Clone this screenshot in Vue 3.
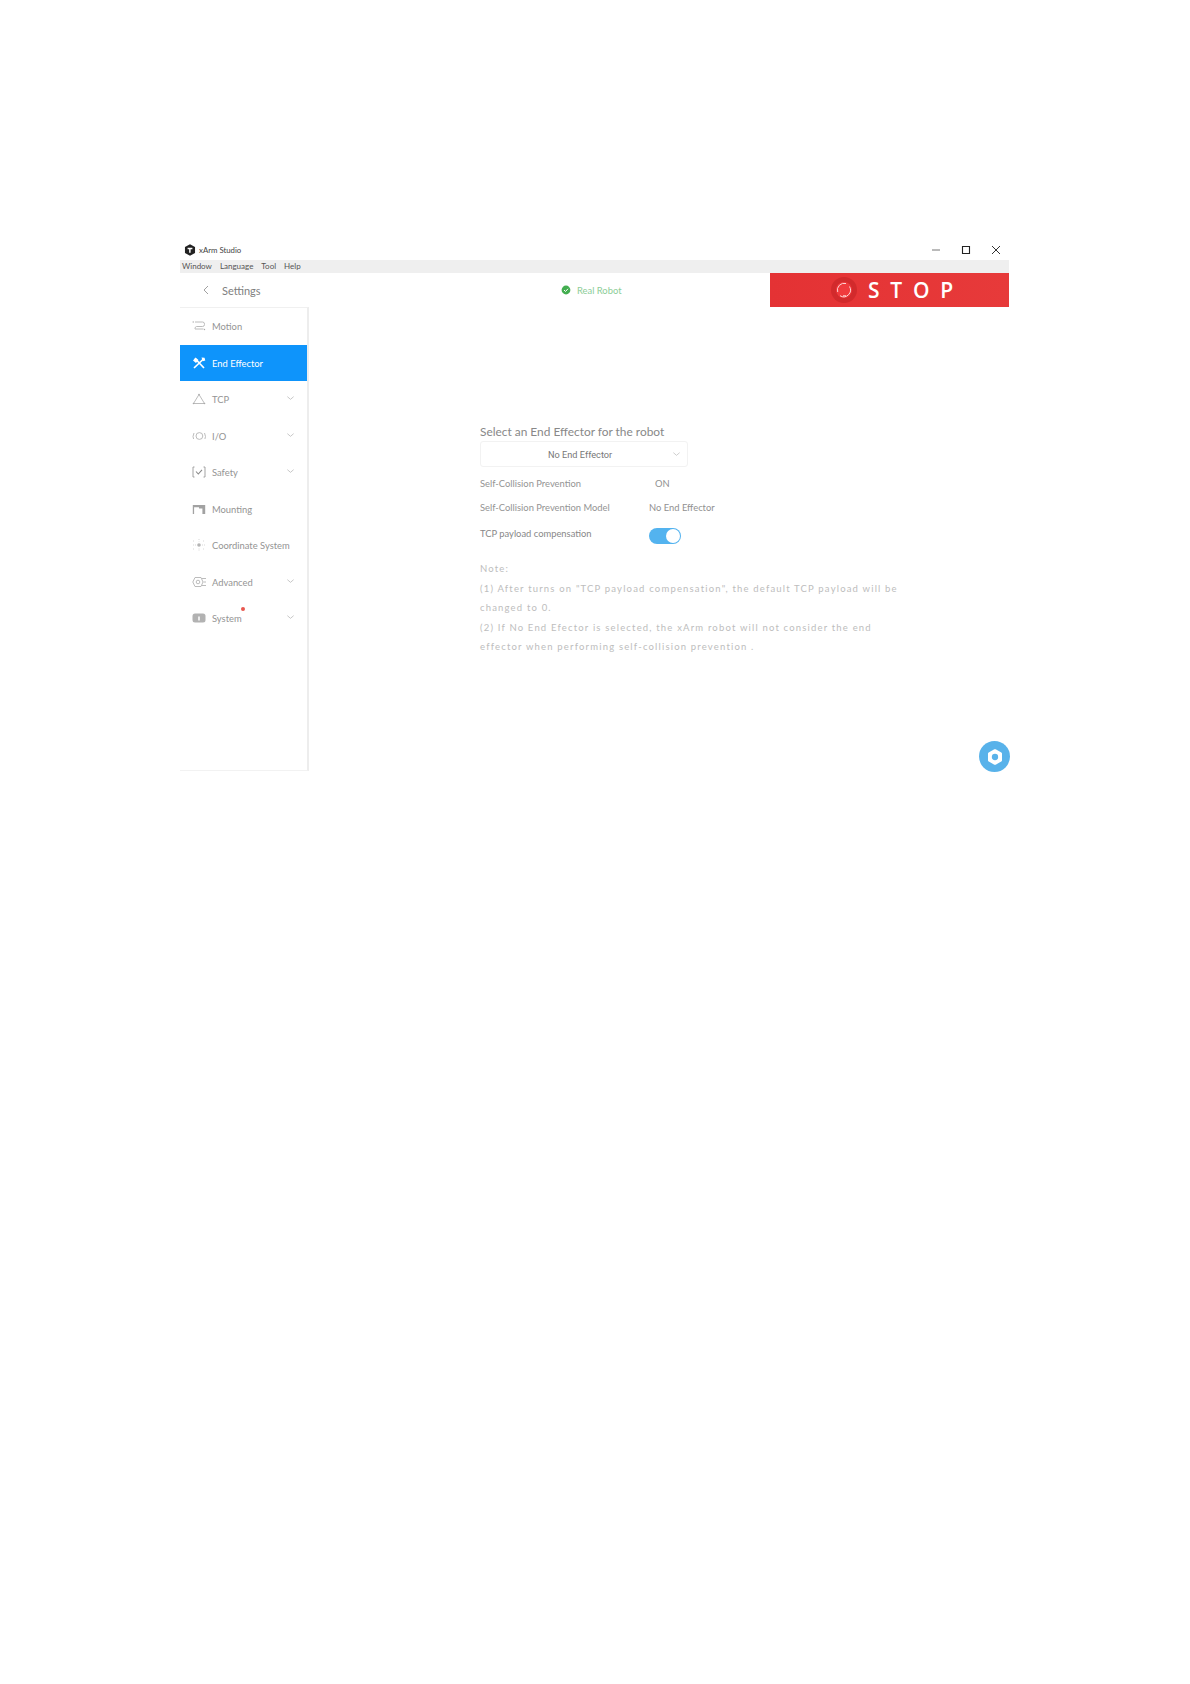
<template>
  <div class="page">
    <div class="window">
      <div class="titlebar">
        <svg class="logo" viewBox="0 0 10 10"><path d="M5 .3 9.200 2.600v4.800L5 9.700.8 7.400V2.600z" fill="#222"/><path d="M3 3.200h4v1.200H5.500V7.300H4.300V4.400H3z" fill="#fff"/></svg>
        <span class="app-name">xArm Studio</span>
        <div class="win-controls">
          <svg viewBox="0 0 12 12"><path d="M2 6h8" stroke="#777" fill="none"/></svg>
          <svg viewBox="0 0 12 12"><path d="M2.500 2.500h7v7h-7z" stroke="#222" stroke-width="1.100" fill="none"/></svg>
          <svg viewBox="0 0 12 12"><path d="M2 2l8 8M10 2l-8 8" stroke="#333" fill="none"/></svg>
        </div>
      </div>
      <div class="menubar">
        <span v-for="m in menus" :key="m">{{ m }}</span>
      </div>
      <div class="header">
        <div class="header-left">
          <svg class="back" viewBox="0 0 10 14"><path d="M7.500 2 2.500 7l5 5" stroke="#888" fill="none"/></svg>
          <span class="settings">Settings</span>
        </div>
        <div class="status">
          <svg viewBox="0 0 10 10"><circle cx="5" cy="5" r="4.400" fill="#43ae50"/><path d="M3 5l1.500 1.500L7 3.800" stroke="#fff" fill="none"/></svg>
          <span>Real Robot</span>
        </div>
        <div class="stop">
          <span class="stop-btn">
            <svg viewBox="0 0 20 20"><circle cx="10" cy="10" r="8" fill="#f03a3d"/><path d="M3.700 12A6.800 6.800 0 0 1 12 3.500M15.500 6.500A6.800 6.800 0 0 1 6 15.700" stroke="#fcd6d6" stroke-width="1" fill="none"/><path d="M9 15.800 12 15.800" stroke="#fcd6d6" stroke-width="1"/></svg>
          </span>
          <span class="stop-text">STOP</span>
        </div>
      </div>
      <div class="body">
        <aside class="sidebar">
          <div v-for="item in items" :key="item.label" class="item" :class="{ active: item.active }">
            <svg class="icon" viewBox="0 0 14 14" v-html="item.icon"></svg>
            <span class="label">{{ item.label }}<i v-if="item.dot" class="dot"></i></span>
            <svg v-if="item.arrow" class="chev" viewBox="0 0 10 6"><path d="M1.500 1.500 5 4.500l3.500-3" stroke="#bbb" fill="none" stroke-width=".9"/></svg>
          </div>
        </aside>
        <main class="content">
          <h2>Select an End Effector for the robot</h2>
          <div class="select">
            <span>No End Effector</span>
            <svg viewBox="0 0 10 6"><path d="M1.500 1.500 5 4.500l3.500-3" stroke="#c4c4c4" fill="none" stroke-width=".9"/></svg>
          </div>
          <div class="row r1"><span class="k">Self-Collision Prevention</span><span class="v on">ON</span></div>
          <div class="row r2"><span class="k">Self-Collision Prevention Model</span><span class="v">No End Effector</span></div>
          <div class="row r3"><span class="k">TCP payload compensation</span><span class="toggle"><i></i></span></div>
          <div class="note">
            <p>Note:</p>
            <p>(1) After turns on "TCP payload compensation", the default TCP payload will be changed to 0.</p>
            <p>(2) If No End Efector is selected, the xArm robot will not consider the end effector when performing self-collision prevention .</p>
          </div>
        </main>
        <div class="fab">
          <svg viewBox="0 0 16 16"><path d="M8 3.300 12.100 5.650v4.700L8 12.700 3.900 10.350v-4.700z" fill="#fff" stroke="#fff" stroke-width="2" stroke-linejoin="round"/><circle cx="8" cy="8" r="2.300" fill="#58b2ea"/></svg>
        </div>
      </div>
    </div>
  </div>
</template>

<script setup>
const menus = ['Window', 'Language', 'Tool', 'Help']
const g = 'stroke="#b4b4b4" fill="none" stroke-width=".9"'
const items = [
  { label: 'Motion', icon: `<path d="M3 3h7.500a2 2 0 0 1 2 2v.5a2 2 0 0 1-2 2H4.500a2 2 0 0 0-1.500 2v.5h8.500" ${g}/><circle cx="1.200" cy="3" r=".7" fill="#aaa"/><circle cx="12.500" cy="10.500" r=".7" fill="#aaa"/>` },
  { label: 'End Effector', active: true, icon: `<path d="M2 12 12 2.500M3 2.500l9 9.500" stroke="#fff" stroke-width="1.700" fill="none"/><path d="M1 4.500 3.500 1.500 6.500 4 4 7zM9.500 1.500l3 .2.800 2.800-2.500.8z" fill="#fff"/>` },
  { label: 'TCP', arrow: true, icon: `<path d="M7 2.500 1.500 11.500h11z" ${g}/><circle cx="7" cy="2.500" r=".8" fill="#aaa"/><circle cx="1.500" cy="11.500" r=".8" fill="#aaa"/><circle cx="12.500" cy="11.500" r=".8" fill="#aaa"/>` },
  { label: 'I/O', arrow: true, icon: `<circle cx="7.400" cy="7" r="3.400" ${g}/><path d="M2 4 1 7.500 1.600 10M12.500 4l1 3.500-.6 2.500" ${g}/>` },
  { label: 'Safety', arrow: true, icon: `<path d="M2.500 2H1v10h1.500M11.500 2H13v10h-1.500" stroke="#999" fill="none" stroke-width=".9"/><path d="M4 6.500 6.300 9 10 4.800" stroke="#888" stroke-width="1.100" fill="none"/>` },
  { label: 'Mounting', icon: `<path d="M.8 3h12.400v9h-2.800V6.500H7V5.200H2.100V12H.8z" fill="#a2a2a2"/>` },
  { label: 'Coordinate System', icon: `<circle cx="7" cy="7" r="1.800" fill="#b4b4b4"/><path d="M7 1v2.500M7 10.500V13M1 7h3M10 7h3M1 3h2M11 3h2M1 11h2M11 11h2" stroke="#d2d2d2" stroke-width=".9" stroke-dasharray="1 1" fill="none"/>` },
  { label: 'Advanced', arrow: true, icon: `<circle cx="6" cy="7" r="1.800" ${g}/><path d="M3 2.500h6l2 4.500-2 4.500H3L.8 7z" ${g}/><path d="M10 3.500h4M11.500 7H14M10 10.500h4" ${g}/>` },
  { label: 'System', arrow: true, dot: true, icon: `<rect x=".5" y="2.500" width="13" height="9" rx="2.500" fill="#b2b2b2"/><path d="M7 5.500v4" stroke="#fff" stroke-width="1.500"/>` },
]
</script>

<style>
body { background: #fff; }
</style>

<style scoped>
.page { padding: 240px 181px 0 180px; height: 1444px; background: #fff; font-family: Lato, "Liberation Sans", sans-serif; }
.window { width: 829px; }
.titlebar { height: 20px; display: flex; align-items: center; padding-left: 4px; }
.logo { width: 12px; height: 12px; }
.app-name { font-size: 7.800px; margin-left: 3px; color: #444; }
.win-controls { margin-left: auto; display: flex; gap: 18px; padding-right: 7px; }
.win-controls svg { width: 12px; height: 12px; }
.menubar { height: 13px; line-height: 13px; background: #efefef; display: flex; align-items: flex-start; gap: 8px; padding-left: 2px; font-size: 8px; color: #555; }
.header { height: 34px; display: flex; align-items: center; position: relative; }
.header-left { display: flex; align-items: center; width: 353px; padding-left: 22px; box-sizing: border-box; }
.back { width: 8px; height: 12px; }
.settings { margin-left: 12px; font-size: 11px; color: #808080; }
.status { display: flex; align-items: center; gap: 6px; width: 208px; margin-left: 28px; font-size: 9.400px; color: #8ccd97; }
.status svg { width: 10px; height: 10px; }
.stop { margin-left: auto; width: 239px; height: 34px; background: linear-gradient(90deg, #e43234, #e73a3a); display: flex; align-items: center; color: #fff; padding-left: 61px; box-sizing: border-box; }
.stop-btn { width: 26px; height: 26px; border-radius: 50%; background: #d22a2c; display: flex; align-items: center; justify-content: center; }
.stop-btn svg { width: 20px; height: 20px; }
.stop-text { font-family: "Open Sans", sans-serif; font-size: 21px; font-weight: 600; letter-spacing: 10.800px; margin-left: 11px; }
.body { display: flex; position: relative; height: 464px; }
.sidebar { width: 129px; height: 464px; box-sizing: border-box; border-right: 2px solid #ededed; border-bottom: 1px solid #f2f2f2; border-top: 1px solid #f0f0f0; }
.item { height: 36.500px; display: flex; align-items: center; padding-left: 12px; color: #949494; font-size: 9.400px; position: relative; }
.item.active { background: #0e94fb; color: #fff; }
.icon { width: 14px; height: 14px; flex: none; }
.label { margin-left: 6px; padding-top: 1px; position: relative; white-space: nowrap; }
.dot { position: absolute; right: -3px; top: -5px; width: 4px; height: 4px; border-radius: 50%; background: #e8574f; }
.chev { width: 9px; height: 6px; position: absolute; right: 12px; top: 14px; }
.content { margin-left: 171px; padding-top: 117px; width: 430px; }
h2 { margin: 0; font-size: 11.900px; font-weight: 400; color: #888; line-height: 16px; font-family: Lato, sans-serif; }
.select { margin-top: 1px; width: 208px; height: 26px; box-sizing: border-box; border: 1px solid #f2f2f2; border-radius: 3px; display: flex; align-items: center; font-family: Roboto, sans-serif; font-size: 9.200px; color: #777; padding-left: 67px; }
.select svg { width: 9px; height: 6px; margin-left: auto; margin-right: 6px; }
.row { display: flex; font-size: 9.400px; color: #949494; font-family: Lato, sans-serif; }
.k { width: 169px; white-space: nowrap; }
.v { white-space: nowrap; color: #919191; }
.v.on { margin-left: 6px; }
.r1 { margin-top: 11px; line-height: 12px; }
.r2 { margin-top: 12px; line-height: 12px; }
.r3 { margin-top: 14px; line-height: 12px; color: #888; }
.toggle { width: 32px; height: 16px; border-radius: 8px; background: #53b3ef; position: relative; }
.toggle i { position: absolute; right: 1px; top: 1px; width: 14px; height: 14px; border-radius: 50%; background: #fff; }
.note { margin-top: 15px; font-size: 9.500px; line-height: 19.600px; letter-spacing: 1.180px; color: #bdbdbd; width: 430px; font-family: Lato, sans-serif; }
.note p { margin: 0; }
.fab { position: absolute; right: -1px; top: 434px; width: 31px; height: 31px; border-radius: 50%; background: #58b2ea; display: flex; align-items: center; justify-content: center; }
.fab svg { width: 22px; height: 22px; }
</style>
